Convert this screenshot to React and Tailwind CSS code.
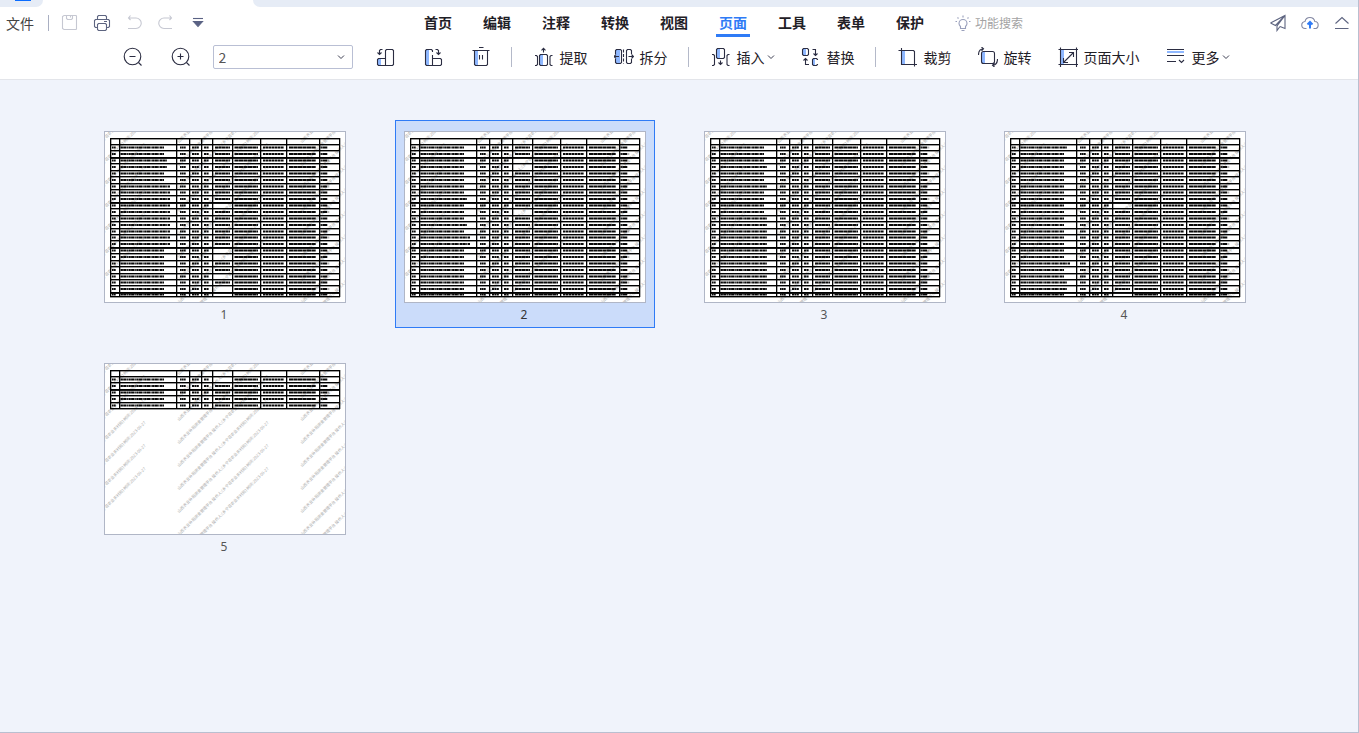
import { useState } from "react";
import clsx from "clsx";

const INK = "#2b2d42";
const SOFT = "#8fb8ff";

const menus = ["首页", "编辑", "注释", "转换", "视图", "页面", "工具", "表单", "保护"];

// rows: length of the address text in every record, s / m / l
// blank: records without a phone number
const pages = [
  { id: 1, rows: "ssmmssllllllllllssssssss", blank: [9, 16, 17, 20, 22, 23] },
  { id: 2, rows: "ssssssssmsssmsllssssssss", blank: [2, 3, 10] },
  { id: 3, rows: "sssmssmssssmmmmmmmmmmmmm", blank: [] },
  { id: 4, rows: "mssssssssssssssssslssmms", blank: [9, 23] },
  { id: 5, rows: "sssss", blank: [0] },
];

const columnLines = [5, 14, 71, 84, 96, 107, 127, 155, 181, 214, 234];
const addressEnd = { s: 59, m: 62, l: 65 };
const watermark = "山西农业补贴资金管理平台 操作人:(乡宁县农业农村局) 时间:2023-09-27";

// Watermark start points, without the ones that never reach the sheet
const watermarkSpots = [-49, 74, 197].flatMap((x) =>
  [11, 34, 57, 80, 103, 126, 149, 172, 195].filter((y) => y + Math.min(x, 0) > 0).map((y) => ({ x, y }))
);

const Icon = ({ children, size = 20, stroke = INK }) => (
  <svg
    width={size}
    height={size}
    viewBox={`0 0 ${size} ${size}`}
    fill="none"
    stroke={stroke}
    strokeWidth="1.1"
    className="shrink-0"
    aria-hidden="true"
  >
    {children}
  </svg>
);

const ZoomOutIcon = () => (
  <Icon>
    <circle cx="9.5" cy="9.5" r="8.3" />
    <path d="M6.500 9.5h6M15.500 15.5l3 3" />
  </Icon>
);

const ZoomInIcon = () => (
  <Icon>
    <circle cx="9.5" cy="9.5" r="8.3" />
    <path d="M6.500 9.5h6M9.500 6.5v6M15.500 15.5l3 3" />
  </Icon>
);

const InsertBeforeIcon = () => (
  <Icon>
    <path d="M3 12h3v7H3z" fill={SOFT} stroke="none" />
    <path d="M10.5 18.5v-15l1-1h6l1 1v14l-1 1H3.5l-1-1v-5l1-1h7" />
    <path d="M7.5 2.5h-2l-1 1v4M2.5 5.5l2 2 2-2" />
  </Icon>
);

const InsertAfterIcon = () => (
  <Icon>
    <path d="M3 3h3v15H3z" fill={SOFT} stroke="none" />
    <path d="M9.5 5V3.500l-1-1h-5l-1 1v14l1 1h14l1-1v-5l-1-1h-8M9.500 8v10.500" />
    <path d="M12.500 2.500h2l1 1v4M13.500 5.500l2 2 2-2" />
  </Icon>
);

const TrashIcon = () => (
  <Icon>
    <path d="M4 4h3v14H4z" fill={SOFT} stroke="none" />
    <path d="M1.500 3.500h17M8 .5h4.500M3.500 3.500v14l1 1h11l1-1v-14M8.500 8v4.500M11.500 8v4.500" />
  </Icon>
);

const ExtractIcon = () => (
  <Icon>
    <path d="M6 8h3v10H6z" fill={SOFT} stroke="none" />
    <path d="M1 8.500h1.500l1 1v8l-1 1H1M18.500 8.500H17l-1 1v8l1 1h1.500" />
    <path d="M6.500 7.500h6l1 1v9l-1 1h-6l-1-1v-9zM9.500 5.500v-4M7.500 3.300l2-2 2 2" />
  </Icon>
);

const SplitIcon = () => (
  <Icon>
    <path d="M2 3h4v13H2z" fill={SOFT} stroke="none" />
    <path d="M1.500 7V3.500l1-1h4l1 1v12l-1 1h-4l-1-1V12M0 9.500h5M2 7.500l-2 2 2 2" />
    <path d="M9.500 2.500v14" strokeDasharray="3 1.500" />
    <path d="M17.500 7V3.500l-1-1h-3l-1 1v12l1 1h3l1-1V12M14.500 9.500h5M17.500 7.500l2 2-2 2" />
  </Icon>
);

const InsertIcon = () => (
  <Icon>
    <path d="M6 2h3v9H6z" fill={SOFT} stroke="none" />
    <path d="M1 7.500h1.500l1 1v9l-1 1H1M18.500 7.500H17l-1 1v9l1 1h1.500" />
    <path d="M6.500 1.500h6l1 1v8l-1 1h-6l-1-1v-8zM9.500 13.500v4M7.500 15.500l2 2 2-2" />
  </Icon>
);

const ReplaceIcon = () => (
  <Icon>
    <path d="M2 2h3v6H2zM11 12h3v6h-3z" fill={SOFT} stroke="none" />
    <path d="M2.500 1.500h4l1 1v5l-1 1h-4l-1-1v-5z" />
    <path d="M11.500 2.500h3v6M12.500 6.500l2 2 2-2" />
    <path d="M8 17.500H4.500v-6M2.500 13.500l2-2 2 2" />
    <path d="M16.500 13v-.5l-1-1h-3l-1 1v5l1 1h3l1-1V17" />
  </Icon>
);

const CropIcon = () => (
  <Icon>
    <path d="M4 4h3v13H4z" fill={SOFT} stroke="none" />
    <path d="M3.500 1v16.500H19M.5 3.500h15l1 1v15" />
  </Icon>
);

const RotateIcon = () => (
  <Icon>
    <path d="M4 5h3v11H4z" fill={SOFT} stroke="none" />
    <rect x="3.500" y="4.500" width="13" height="12" rx="2" />
    <path d="M.5 8C.5 4 2 2 5.500 1.800M3.500 0l2 1.800-2 2" />
    <path d="M19.500 12c0 4-1.500 6-5 6.300M16.500 16l-2 2.300 2 1.700" />
  </Icon>
);

const PageSizeIcon = () => (
  <Icon>
    <path d="M3 3h3v14H3z" fill={SOFT} stroke="none" />
    <path d="M.5 2.500h19.500M.5 17.500h19.500M2.500 .5v19.500M18.500 .5v19.500" />
    <path d="M6 15l9-9M11 5.500h4.500V10M5.500 11v4.500H10" />
  </Icon>
);

const MoreIcon = () => (
  <Icon>
    <path d="M1 4h17v2H1z" fill={SOFT} stroke="none" />
    <path d="M1 2.500h17M1 8.500h17M1 14.500h9M13 13l2.500 2.500L18 13" />
  </Icon>
);

const Chevron = () => (
  <svg width="8" height="8" viewBox="0 0 8 8" fill="none" stroke="#3c3e52" aria-hidden="true">
    <path d="M1 2.500l3 3 3-3" />
  </svg>
);

const quickActions = [
  {
    label: "保存",
    stroke: "#c6c8d2",
    icon: <path d="M3 1.500h12l.5 .5v13l-.5 .5H3L1.500 14.500V2.500zM5.500 1.500v3l1 1h4l1-1v-3M9.500 2v1.500" />,
  },
  {
    label: "打印",
    stroke: "#5d6480",
    icon: (
      <>
        <path d="M4.500 5V2.500l1-1h7l1 1V5M4.500 13.500h-2l-1-1v-6l1-1h13l1 1v6l-1 1h-2M11 7.500h3" />
        <path d="M5.500 9.500h7l1 1v5l-1 1h-7l-1-1v-5z" />
      </>
    ),
  },
  {
    label: "撤销",
    stroke: "#c6c8d2",
    icon: <path d="M5.500 1.500L3.500 4l2 2M3.500 4h7.500a5 5 0 0 1 0 10.500H3" />,
  },
  {
    label: "重做",
    stroke: "#c6c8d2",
    icon: <path d="M12.500 1.500L14.500 4l-2 2M14.500 4H7a5 5 0 0 0 0 10.500h8" />,
  },
  {
    label: "自定义快速访问",
    stroke: "#5a6284",
    icon: (
      <>
        <path d="M4 4.500h10" />
        <path d="M4.500 7.500h9l-4.500 5z" fill="#5a6284" />
      </>
    ),
  },
];

const Divider = () => <div className="w-px h-5 ml-5 mr-[22px] bg-[#b4b9c9]" />;

const ToolButton = ({ icon, label, dropdown }) => (
  <button type="button" className="h-6 flex items-center text-sm text-[#1f2026] whitespace-nowrap">
    {icon}
    <span className="ml-1.5">{label}</span>
    {dropdown && (
      <span className="ml-0.5">
        <Chevron />
      </span>
    )}
  </button>
);

const PageThumbnail = ({ id, rows, blank }) => {
  const total = rows.length + 1;
  const lineY = (i) => (i === 25 ? 164 : Math.round(5.5 + i * 6.43));
  const bottom = lineY(total);

  return (
    <svg viewBox="0 0 240 170" className="block w-full h-full" role="img" aria-label={`第 ${id} 页`}>
      <g fill="#a8a8a8" fontSize="4" className="font-['Noto_Sans_CJK_SC',sans-serif]">
        {watermarkSpots.map((m) => (
          <text key={`${m.x},${m.y}`} transform={`translate(${m.x} ${m.y}) rotate(-45)`}>
            {watermark}
          </text>
        ))}
      </g>

      {/* Table grid */}
      <g fill="#000">
        {Array.from({ length: total + 1 }, (_, i) => (
          <rect key={i} x="5" y={lineY(i)} width="230" height={i % 7 === 3 ? 1.9 : 1.4} />
        ))}
        {columnLines.map((x) => (
          <rect key={x} x={x} y="6" width="1.300" height={bottom - 5} />
        ))}
      </g>

      {/* Records */}
      <g stroke="#0a0a0a" strokeWidth="2.200">
        {rows.split("").map((size, i) => {
          const y = (lineY(i + 1) + lineY(i + 2) + 1) / 2;
          const amountEnd = (i * 7 + id * 3) % 4 === 1 ? 225 : 223;
          return (
            <g key={i}>
              <path d={`M7 ${y}h4M75 ${y}h6`} strokeDasharray="1.700 .3" />
              <path d={`M15.500 ${y}H${addressEnd[size]}`} strokeDasharray="2.400 .3 3.100 .4 1.200 .5" />
              <path d={`M87 ${y}h7M99 ${y}h5`} strokeDasharray="2 .4" />
              {!blank.includes(i) && <path d={`M110 ${y}h15`} strokeDasharray="3.200 .3" />}
              <path d={`M129.500 ${y}h23.500M184 ${y}h27`} strokeDasharray="4.200 .3" />
              <path d={`M158 ${y}h21`} strokeDasharray="2.200 .4 3 .4" />
              <path d={`M215.500 ${y}H${amountEnd}`} strokeDasharray="1.400 .4 5" />
            </g>
          );
        })}
      </g>
    </svg>
  );
};

const App = () => {
  const [activeMenu, setActiveMenu] = useState("页面");
  const [current, setCurrent] = useState(2);

  return (
    <div className="min-h-screen flex flex-col bg-[#f0f3fb] border-r border-b border-[#b9bfd0] font-['Noto_Sans_CJK_SC',sans-serif]">
      {/* Window tabs */}
      <div className="h-[7px] flex bg-white">
        <div className="w-[43px] bg-[#e6ecf6] rounded-br-[7px]">
          <div className="w-4 h-px ml-[15px] bg-[#0a6cff]" />
        </div>
        <div className="flex-1 ml-[210px] bg-[#e6ecf6] rounded-bl-[7px]" />
      </div>

      {/* Menu bar */}
      <div className="h-8 flex items-center bg-white">
        <div className="w-[421px] flex items-center shrink-0">
          <button type="button" className="ml-1.5 text-sm text-[#444]">
            文件
          </button>
          <div className="w-px h-4 ml-3.5 mr-3 bg-[#a9afc2]" />
          <div className="flex gap-3.5">
            {quickActions.map((a) => (
              <button key={a.label} type="button" aria-label={a.label}>
                <Icon size={18} stroke={a.stroke}>
                  {a.icon}
                </Icon>
              </button>
            ))}
          </div>
        </div>

        <nav className="h-full flex gap-[25px]">
          {menus.map((m) => (
            <button
              key={m}
              type="button"
              onClick={() => setActiveMenu(m)}
              className={clsx(
                "w-[34px] h-[30px] pt-[3px] text-sm font-bold border-b-3 whitespace-nowrap",
                m === activeMenu ? "text-[#2f7bf6] border-[#2f7bf6]" : "text-[#1f2026] border-transparent"
              )}
            >
              {m}
            </button>
          ))}
        </nav>

        <button type="button" className="ml-7 flex items-center gap-1 text-xs text-[#a3a3a3] whitespace-nowrap">
          <Icon size={16} stroke="#9aa0bc">
            <path d="M5.500 11.500C4 10 4 9 4 8.500a4 4 0 0 1 8 0c0 .5 0 1.500-1.500 3v2h-5zM6.500 15.500h3M8 .5v2M2.500 2.500l1 1M13.500 2.500l-1 1M.5 6.500h1.500M14 6.500h1.500" />
          </Icon>
          功能搜索
        </button>

        <div className="ml-auto mr-[7px] flex gap-3.5">
          <button type="button" aria-label="分享">
            <Icon size={18} stroke="#5d6480">
              <path d="M1.500 9L16 1.500v13l-5-2M1.500 9l5 2.500L16 1.500l-8 10.500v4.500l3-4" />
            </Icon>
          </button>
          <button type="button" aria-label="上传">
            <Icon size={18} stroke="#8388a3">
              <path d="M5.500 14.500H4.500a3.500 3.500 0 0 1-.5-7 5 5 0 0 1 9.800 0 3.500 3.500 0 0 1-.3 7h-1" />
              <path d="M9 14.500V8.500M6.500 10.500L9 8l2.500 2.500" stroke="#2f7bf6" strokeWidth="2" />
            </Icon>
          </button>
          <button type="button" aria-label="收起工具栏">
            <Icon size={18} stroke="#5d6480">
              <path d="M2.500 9.500L9 3.500l6.500 6M2 14.500h13.500" />
            </Icon>
          </button>
        </div>
      </div>

      {/* Page tools */}
      <div className="h-[41px] pb-1 pr-1.5 flex items-center justify-center bg-white border-b border-[#e3e5ea]">
        <div className="flex gap-7">
          <button type="button" aria-label="缩小">
            <ZoomOutIcon />
          </button>
          <button type="button" aria-label="放大">
            <ZoomInIcon />
          </button>
        </div>

        <div className="grid items-center mx-[22px]">
          <select
            aria-label="页码"
            value={current}
            onChange={(e) => setCurrent(Number(e.target.value))}
            className="col-start-1 row-start-1 w-[140px] h-6 pl-[5px] appearance-none rounded-xs border border-[#b9bfd4] bg-white text-sm leading-5 text-[#555]"
          >
            {pages.map((p) => (
              <option key={p.id} value={p.id}>
                {p.id}
              </option>
            ))}
          </select>
          <span className="col-start-1 row-start-1 justify-self-end mr-2 pointer-events-none">
            <Chevron />
          </span>
        </div>

        <div className="flex gap-7">
          <button type="button" aria-label="在前面插入页面">
            <InsertBeforeIcon />
          </button>
          <button type="button" aria-label="在后面插入页面">
            <InsertAfterIcon />
          </button>
          <button type="button" aria-label="删除页面">
            <TrashIcon />
          </button>
        </div>

        <Divider />
        <div className="flex gap-[26px]">
          <ToolButton icon={<ExtractIcon />} label="提取" />
          <ToolButton icon={<SplitIcon />} label="拆分" />
        </div>

        <Divider />
        <div className="flex gap-[26px]">
          <ToolButton icon={<InsertIcon />} label="插入" dropdown />
          <ToolButton icon={<ReplaceIcon />} label="替换" />
        </div>

        <Divider />
        <div className="flex gap-[26px]">
          <ToolButton icon={<CropIcon />} label="裁剪" />
          <ToolButton icon={<RotateIcon />} label="旋转" />
          <ToolButton icon={<PageSizeIcon />} label="页面大小" />
          <ToolButton icon={<MoreIcon />} label="更多" dropdown />
        </div>
      </div>

      {/* Page thumbnails */}
      <main className="flex-1 grid grid-cols-[repeat(auto-fill,260px)] content-start gap-x-10 gap-y-6 pt-10 pl-[95px]">
        {pages.map((p) => (
          <button
            key={p.id}
            type="button"
            onClick={() => setCurrent(p.id)}
            className={clsx(
              "h-52 pt-2.5 px-2 flex flex-col border",
              p.id === current ? "bg-[#cbdcfa] border-[#2f7bf6] text-[#333]" : "border-transparent text-[#555]"
            )}
          >
            <div className="w-[242px] h-[172px] shrink-0 bg-white border border-[#b0b6c6]">
              <PageThumbnail {...p} />
            </div>
            <span className="w-full pr-0.5 text-center text-xs leading-6 font-['Noto_Sans',sans-serif]">{p.id}</span>
          </button>
        ))}
      </main>
    </div>
  );
};

export default App;
